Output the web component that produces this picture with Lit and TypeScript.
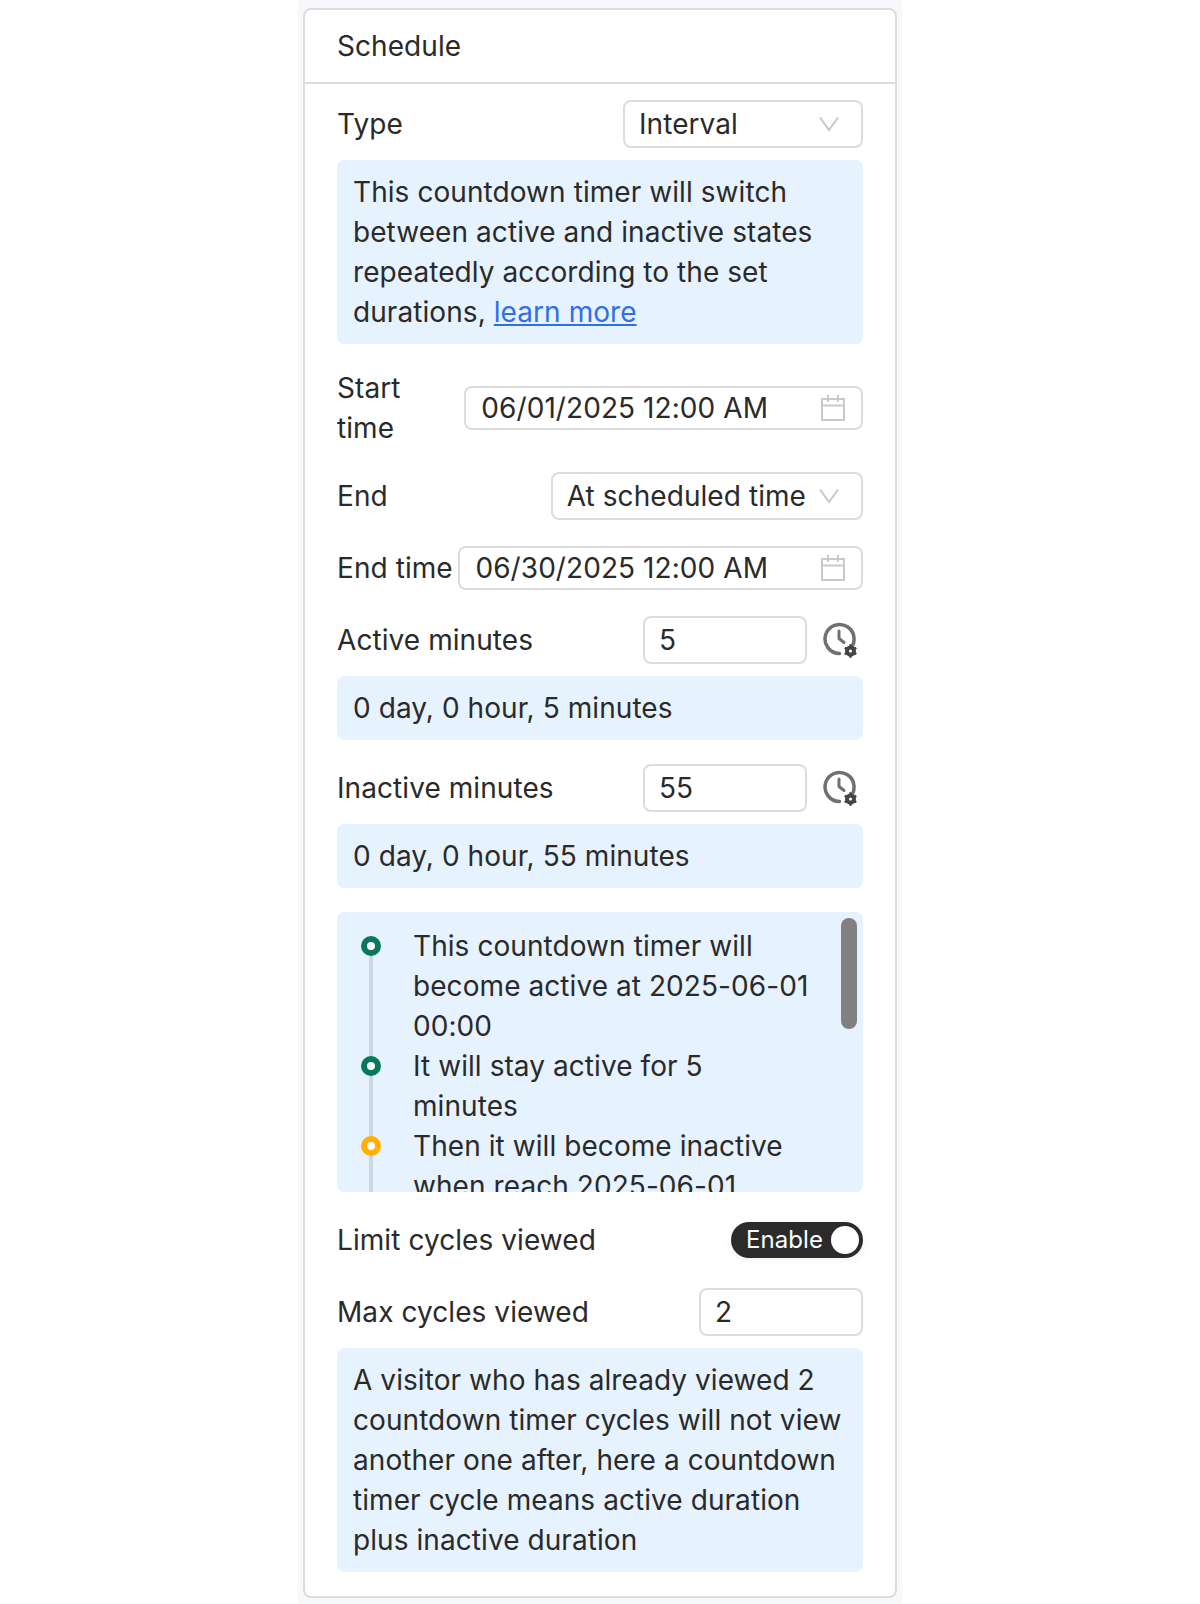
import { LitElement, html, css } from "lit";
import { customElement } from "lit/decorators.js";

const chevron = html`<svg class="chev" width="24" height="24" viewBox="0 0 24 24" fill="none"><path d="M3 5.5 L12 18 L21 5.5" stroke="#c8c8c8" stroke-width="2"/></svg>`;
const calendar = html`<svg class="cal" width="24" height="26" viewBox="0 0 24 26" fill="none" stroke="#c9c9c9" stroke-width="2"><rect x="1" y="4" width="22" height="21"/><path d="M1 10.5H23M7 0V7M17 0V7"/></svg>`;
const clock = html`<svg class="clock" width="36" height="36" viewBox="0 0 36 36" fill="none">
  <path d="M28 28A14.5 14.5 0 1 0 18.5 31.5" stroke="#707070" stroke-width="3.5" stroke-linecap="round"/>
  <path d="M18 9V16.5L23 20.5" stroke="#707070" stroke-width="3" stroke-linecap="round" stroke-linejoin="round"/>
  <circle cx="29.5" cy="29" r="4" stroke="#444" stroke-width="3"/>
  <path d="M29.5 22.3V35.7M23.7 25.7L35.3 32.3M23.7 32.3L35.3 25.7" stroke="#444" stroke-width="2.4"/>
  <circle cx="29.5" cy="29" r="1.6" fill="#fff"/>
</svg>`;

@customElement("app-root")
export class AppRoot extends LitElement {
  static styles = css`
    :host { display: block; font-family: Inter, "Liberation Sans", sans-serif; font-size: 28px; line-height: 40px; letter-spacing: 0.07px; color: #2a2a2a; }
    .page { width: 604px; margin: 0 auto; background: #f6f8fc; padding: 8px 5px 6px; box-sizing: border-box; height: 1604px; }
    .card { background: #fff; border: 2px solid #dcdcdc; border-radius: 8px; box-sizing: border-box; width: 594px; height: 1590px; }
    .head { height: 72px; padding: 0 32px; display: flex; align-items: center; border-bottom: 2px solid #dcdcdc; }
    .body { padding: 16px 32px 24px; display: flex; flex-direction: column; }
    .row { display: flex; align-items: center; justify-content: space-between; gap: 4px; min-height: 48px; }
    .row > .label { min-width: 0; }
    .field { box-sizing: border-box; border: 2px solid #dcdcdc; border-radius: 8px; background: #fff; display: flex; align-items: center; flex: none; padding: 0 14px; }
    .select { height: 48px; justify-content: space-between; gap: 11px; min-width: 240px; padding-right: 20px; }
    .date { height: 44px; gap: 53px; padding-left: 15px; padding-right: 16px; }
    .num { height: 48px; width: 164px; }
    .with-icon { display: flex; align-items: center; gap: 14px; flex: none; padding-right: 6px; }
    .clock { display: block; }
    .cal, .chev { display: block; flex: none; }
    .info { background: #e6f2fe; border-radius: 8px; padding: 12px 16px; margin-top: 12px; }
    a { color: #2f6fed; text-decoration: underline; }
    .gap { margin-top: 24px; }
    .timeline { position: relative; height: 280px; overflow: hidden; background: #e6f2fe; border-radius: 8px; margin-top: 24px; }
    .items { padding: 14px 0 0 24px; }
    .item { display: flex; gap: 32px; position: relative; }
    .text { width: 400px; }
    .rail { width: 20px; flex: none; position: relative; align-self: stretch; }
    .dot { position: absolute; top: 10px; left: 0; width: 20px; height: 20px; box-sizing: border-box; border-radius: 50%; border: 6px solid #08775a; background: #fff; z-index: 1; }
    .dot.warn { border-color: #ffb000; }
    .line { position: absolute; left: 8px; top: 20px; bottom: -20px; width: 4px; background: #cdd6e3; }
    .thumb { position: absolute; right: 6px; top: 6px; width: 16px; height: 111px; border-radius: 8px; background: #808080; }
    .toggle { box-sizing: border-box; width: 132px; height: 36px; border-radius: 18px; background: #2b2b2b; color: #fff; font-size: 24px; line-height: 36px; display: flex; align-items: center; justify-content: space-between; padding: 0 4px 0 15px; flex: none; box-shadow: 0 2px 8px rgba(0, 0, 0, 0.06); }
    .knob { width: 28px; height: 28px; border-radius: 50%; background: #fff; }
  `;

  render() {
    return html`
      <div class="page"><div class="card">
        <div class="head">Schedule</div>
        <div class="body">
          <div class="row"><span class="label">Type</span><div class="field select"><span>Interval</span>${chevron}</div></div>
          <div class="info">This countdown timer will switch between active and inactive states repeatedly according to the set durations, <a href="#">learn more</a></div>
          <div class="row gap"><span class="label">Start time</span><div class="field date"><span>06/01/2025 12:00 AM</span>${calendar}</div></div>
          <div class="row gap"><span class="label">End</span><div class="field select"><span>At scheduled time</span>${chevron}</div></div>
          <div class="row gap"><span class="label">End time</span><div class="field date"><span>06/30/2025 12:00 AM</span>${calendar}</div></div>
          <div class="row gap"><span class="label">Active minutes</span><div class="with-icon"><div class="field num">5</div>${clock}</div></div>
          <div class="info">0 day, 0 hour, 5 minutes</div>
          <div class="row gap"><span class="label">Inactive minutes</span><div class="with-icon"><div class="field num">55</div>${clock}</div></div>
          <div class="info">0 day, 0 hour, 55 minutes</div>
          <div class="timeline">
            <div class="items">
              <div class="item"><div class="rail"><div class="dot"></div><div class="line"></div></div><div class="text">This countdown timer will become active at 2025-06-01 00:00</div></div>
              <div class="item"><div class="rail"><div class="dot"></div><div class="line"></div></div><div class="text">It will stay active for 5 minutes</div></div>
              <div class="item"><div class="rail"><div class="dot warn"></div><div class="line"></div></div><div class="text">Then it will become inactive when reach 2025-06-01 00:05</div></div>
            </div>
            <div class="thumb"></div>
          </div>
          <div class="row gap"><span class="label">Limit cycles viewed</span><div class="toggle"><span>Enable</span><div class="knob"></div></div></div>
          <div class="row gap"><span class="label">Max cycles viewed</span><div class="field num">2</div></div>
          <div class="info">A visitor who has already viewed 2 countdown timer cycles will not view another one after, here a countdown timer cycle means active duration plus inactive duration</div>
        </div>
      </div></div>
    `;
  }
}
